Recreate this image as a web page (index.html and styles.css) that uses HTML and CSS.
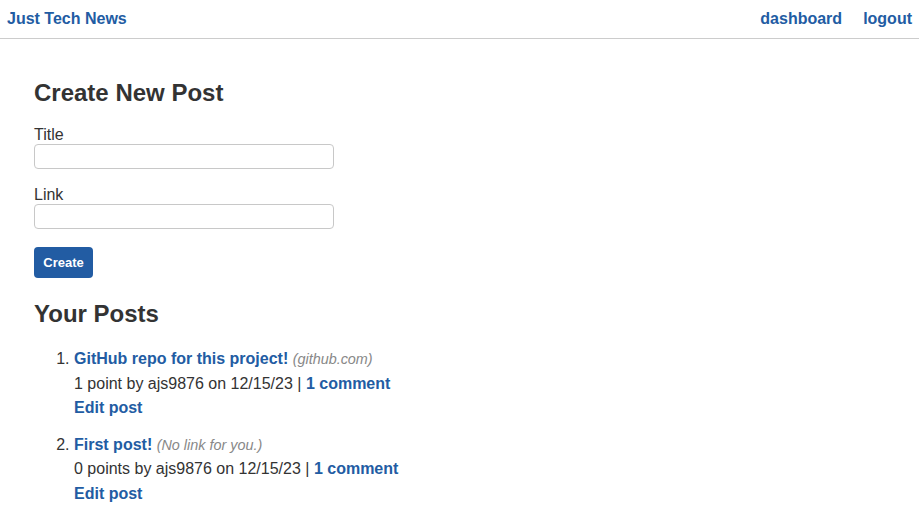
FILE: index.html
```html
<!DOCTYPE html>
<html>
<head>
<meta charset="utf-8">
<link rel="stylesheet" href="styles.css">
</head>
<body>
<header class="topbar">
  <a class="brand" href="#">Just Tech News</a>
  <nav class="nav">
    <a href="#">dashboard</a>
    <a href="#">logout</a>
  </nav>
</header>
<main class="main">
  <section class="create">
    <h2 class="heading heading-create">Create New Post</h2>
    <form class="form">
      <div class="field">
        <label for="title">Title</label>
        <input id="title" type="text">
      </div>
      <div class="field">
        <label for="link">Link</label>
        <input id="link" type="text">
      </div>
      <button type="button" class="btn">Create</button>
    </form>
  </section>
  <section class="posts">
    <h2 class="heading heading-posts">Your Posts</h2>
    <ol class="post-list">
      <li class="post">
        <div><a href="#">GitHub repo for this project!</a> <span class="domain">(github.com)</span></div>
        <div class="meta">1 point by ajs9876 on 12/15/23 | <a href="#">1 comment</a></div>
        <div><a href="#">Edit post</a></div>
      </li>
      <li class="post">
        <div><a href="#">First post!</a> <span class="domain">(No link for you.)</span></div>
        <div class="meta">0 points by ajs9876 on 12/15/23 | <a href="#">1 comment</a></div>
        <div><a href="#">Edit post</a></div>
      </li>
    </ol>
  </section>
</main>
</body>
</html>
```
FILE: styles.css
```css
* { box-sizing: border-box; }
body {
  margin: 0;
  font-family: "Liberation Sans", Arial, sans-serif;
  font-size: 16px;
  color: #333;
  background: #fff;
}
a {
  color: #225ca3;
  font-weight: bold;
  text-decoration: none;
}
.topbar {
  display: flex;
  justify-content: space-between;
  align-items: center;
  height: 39px;
  padding: 0 7px;
  border-bottom: 1px solid #ccc;
}
.nav {
  display: flex;
  gap: 21px;
}
.main {
  padding: 40px 34px 0;
}
.heading {
  margin: 0;
  font-size: 24px;
  font-weight: bold;
  color: #333;
}
.heading-create {
  margin-bottom: 19px;
}
.heading-posts {
  margin-bottom: 19px;
}
.form {
  display: flex;
  flex-direction: column;
  align-items: flex-start;
}
.field {
  display: flex;
  flex-direction: column;
  margin-bottom: 17px;
}
.field label {
  line-height: 18px;
}
.field input {
  width: 300px;
  height: 25px;
  border: 1px solid #c8c8c8;
  border-radius: 4px;
  font: inherit;
}
.btn {
  margin-top: 1px;
  width: 59px;
  height: 31px;
  background: #225ca3;
  color: #fff;
  border: none;
  border-radius: 4px;
  font-family: inherit;
  font-size: 13px;
  font-weight: bold;
  padding: 0;
}
.posts {
  margin-top: 22px;
}
.post-list {
  margin: 0;
  padding-left: 40px;
}
.post {
  line-height: 24.5px;
  margin-bottom: 12px;
}
.domain {
  font-style: italic;
  font-size: 14.4px;
  line-height: 1;
  color: #888;
}
```
